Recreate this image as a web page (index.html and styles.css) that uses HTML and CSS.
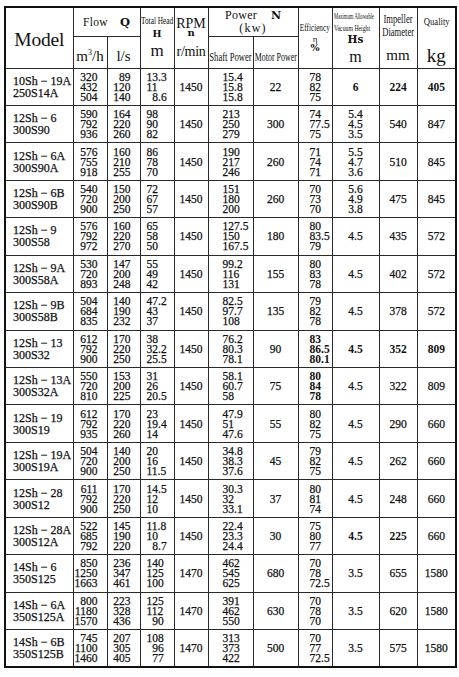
FILE: index.html
```html
<!DOCTYPE html>
<html lang="en">
<head>
<meta charset="utf-8">
<title>Sh pump specifications</title>
<link rel="stylesheet" href="styles.css">
</head>
<body>
<div class="sheet">
<table class="spec">
  <colgroup>
    <col class="w-model"><col class="w-m3h"><col class="w-ls"><col class="w-head"><col class="w-rpm"><col class="w-shaft"><col class="w-motor"><col class="w-eff"><col class="w-vac"><col class="w-imp"><col class="w-qual">
  </colgroup>
  <thead>
    <tr class="h1">
      <th rowspan="2" class="model-h">Model</th>
      <th colspan="2" class="flow-h"><span class="word">Flow</span><span class="sym q">Q</span></th>
      <th rowspan="2" class="stack">
        <div class="cond head-t"><span>Total Head</span></div>
        <div class="sym h-sym">H</div>
        <div class="unit m-unit">m</div>
      </th>
      <th rowspan="2" class="stack">
        <div class="rpm-t">RPM</div>
        <div class="sym n-sym">n</div>
        <div class="unit rmin">r/min</div>
      </th>
      <th colspan="2" class="power-h">
        <div class="pw-line"><span class="word">Power</span><span class="sym">N</span></div>
        <div class="kw">(kw)</div>
      </th>
      <th rowspan="2" class="stack">
        <div class="cond eff-t"><span>Efficiency</span></div>
        <div class="eta">η</div>
        <div class="sym pct">%</div>
      </th>
      <th rowspan="2" class="stack vac">
        <div class="cond tiny max-t"><span>Maximum Allowable</span></div>
        <div class="cond tiny vh-t"><span>Vacuum Height</span></div>
        <div class="sym hs">Hs</div>
        <div class="unit vm">m</div>
      </th>
      <th rowspan="2" class="stack imp">
        <div class="cond imp-t"><span>Impeller</span></div>
        <div class="cond imp-t"><span>Diameter</span></div>
        <div class="unit mm">mm</div>
      </th>
      <th rowspan="2" class="stack">
        <div class="cond q-t"><span>Quality</span></div>
        <div class="unit kg">kg</div>
      </th>
    </tr>
    <tr class="h2">
      <th class="unit2">m<sup>3</sup>/h</th>
      <th class="unit2">l/s</th>
      <th class="cond sub shaft-t"><span>Shaft Power</span></th>
      <th class="cond sub motor-t"><span>Motor Power</span></th>
    </tr>
  </thead>
  <tbody>
    <tr><td class="model">10Sh − 19A<br>250S14A</td><td class="r">320<br>432<br>504</td><td class="r">89<br>120<br>140</td><td class="hd">13.3<br>11<br>&#8199;8.6</td><td class="c">1450</td><td class="sh">15.4<br>15.8<br>15.8</td><td class="c">22</td><td class="ef">78<br>82<br>75</td><td class="c b">6</td><td class="c b">224</td><td class="c b">405</td></tr>
    <tr><td class="model">12Sh − 6<br>300S90</td><td class="r">590<br>792<br>936</td><td class="r">164<br>220<br>260</td><td class="hd">98<br>90<br>82</td><td class="c">1450</td><td class="sh">213<br>250<br>279</td><td class="c">300</td><td class="ef">74<br>77.5<br>75</td><td class="c">5.4<br>4.5<br>3.5</td><td class="c">540</td><td class="c">847</td></tr>
    <tr><td class="model">12Sh − 6A<br>300S90A</td><td class="r">576<br>755<br>918</td><td class="r">160<br>210<br>255</td><td class="hd">86<br>78<br>70</td><td class="c">1450</td><td class="sh">190<br>217<br>246</td><td class="c">260</td><td class="ef">71<br>74<br>71</td><td class="c">5.5<br>4.7<br>3.6</td><td class="c">510</td><td class="c">845</td></tr>
    <tr><td class="model">12Sh − 6B<br>300S90B</td><td class="r">540<br>720<br>900</td><td class="r">150<br>200<br>250</td><td class="hd">72<br>67<br>57</td><td class="c">1450</td><td class="sh">151<br>180<br>200</td><td class="c">260</td><td class="ef">70<br>73<br>70</td><td class="c">5.6<br>4.9<br>3.8</td><td class="c">475</td><td class="c">845</td></tr>
    <tr><td class="model">12Sh − 9<br>300S58</td><td class="r">576<br>792<br>972</td><td class="r">160<br>220<br>270</td><td class="hd">65<br>58<br>50</td><td class="c">1450</td><td class="sh">127.5<br>150<br>167.5</td><td class="c">180</td><td class="ef">80<br>83.5<br>79</td><td class="c">4.5</td><td class="c">435</td><td class="c">572</td></tr>
    <tr><td class="model">12Sh − 9A<br>300S58A</td><td class="r">530<br>720<br>893</td><td class="r">147<br>200<br>248</td><td class="hd">55<br>49<br>42</td><td class="c">1450</td><td class="sh">99.2<br>116<br>131</td><td class="c">155</td><td class="ef">80<br>83<br>78</td><td class="c">4.5</td><td class="c">402</td><td class="c">572</td></tr>
    <tr><td class="model">12Sh − 9B<br>300S58B</td><td class="r">504<br>684<br>835</td><td class="r">140<br>190<br>232</td><td class="hd">47.2<br>43<br>37</td><td class="c">1450</td><td class="sh">82.5<br>97.7<br>108</td><td class="c">135</td><td class="ef">79<br>82<br>78</td><td class="c">4.5</td><td class="c">378</td><td class="c">572</td></tr>
    <tr><td class="model">12Sh − 13<br>300S32</td><td class="r">612<br>792<br>900</td><td class="r">170<br>220<br>250</td><td class="hd">38<br>32.2<br>25.5</td><td class="c">1450</td><td class="sh">76.2<br>80.3<br>78.1</td><td class="c">90</td><td class="ef b">83<br>86.5<br>80.1</td><td class="c b">4.5</td><td class="c b">352</td><td class="c b">809</td></tr>
    <tr><td class="model">12Sh − 13A<br>300S32A</td><td class="r">550<br>720<br>810</td><td class="r">153<br>200<br>225</td><td class="hd">31<br>26<br>20.5</td><td class="c">1450</td><td class="sh">58.1<br>60.7<br>58</td><td class="c">75</td><td class="ef b">80<br>84<br>78</td><td class="c">4.5</td><td class="c">322</td><td class="c">809</td></tr>
    <tr><td class="model">12Sh − 19<br>300S19</td><td class="r">612<br>792<br>935</td><td class="r">170<br>220<br>260</td><td class="hd">23<br>19.4<br>14</td><td class="c">1450</td><td class="sh">47.9<br>51<br>47.6</td><td class="c">55</td><td class="ef">80<br>82<br>75</td><td class="c">4.5</td><td class="c">290</td><td class="c">660</td></tr>
    <tr><td class="model">12Sh − 19A<br>300S19A</td><td class="r">504<br>720<br>900</td><td class="r">140<br>200<br>250</td><td class="hd">20<br>16<br>11.5</td><td class="c">1450</td><td class="sh">34.8<br>38.3<br>37.6</td><td class="c">45</td><td class="ef">79<br>82<br>75</td><td class="c">4.5</td><td class="c">262</td><td class="c">660</td></tr>
    <tr><td class="model">12Sh − 28<br>300S12</td><td class="r">611<br>792<br>900</td><td class="r">170<br>220<br>250</td><td class="hd">14.5<br>12<br>10</td><td class="c">1450</td><td class="sh">30.3<br>32<br>33.1</td><td class="c">37</td><td class="ef">80<br>81<br>74</td><td class="c">4.5</td><td class="c">248</td><td class="c">660</td></tr>
    <tr><td class="model">12Sh − 28A<br>300S12A</td><td class="r">522<br>685<br>792</td><td class="r">145<br>190<br>220</td><td class="hd">11.8<br>10<br>&#8199;8.7</td><td class="c">1450</td><td class="sh">22.4<br>23.3<br>24.4</td><td class="c">30</td><td class="ef">75<br>80<br>77</td><td class="c b">4.5</td><td class="c b">225</td><td class="c">660</td></tr>
    <tr><td class="model">14Sh − 6<br>350S125</td><td class="r">850<br>1250<br>1663</td><td class="r">236<br>347<br>461</td><td class="hd">140<br>125<br>100</td><td class="c">1470</td><td class="sh">462<br>545<br>625</td><td class="c">680</td><td class="ef">70<br>78<br>72.5</td><td class="c">3.5</td><td class="c">655</td><td class="c">1580</td></tr>
    <tr><td class="model">14Sh − 6A<br>350S125A</td><td class="r">800<br>1180<br>1570</td><td class="r">223<br>328<br>436</td><td class="hd">125<br>112<br>&#8199;90</td><td class="c">1470</td><td class="sh">391<br>462<br>550</td><td class="c">630</td><td class="ef">70<br>78<br>70</td><td class="c">3.5</td><td class="c">620</td><td class="c">1580</td></tr>
    <tr><td class="model">14Sh − 6B<br>350S125B</td><td class="r">745<br>1100<br>1460</td><td class="r">207<br>305<br>405</td><td class="hd">108<br>&#8199;96<br>&#8199;77</td><td class="c">1470</td><td class="sh">313<br>373<br>422</td><td class="c">500</td><td class="ef">70<br>77<br>72.5</td><td class="c">3.5</td><td class="c">575</td><td class="c">1580</td></tr>
  </tbody>
</table>
</div>
</body>
</html>
```
FILE: styles.css
```css
html, body {
  margin: 0;
  padding: 0;
  background: #ffffff;
}
body {
  font-family: "Liberation Serif", "Times New Roman", serif;
  color: #111111;
}
.sheet {
  padding: 6px 0 0 4px;
}
.spec {
  border-collapse: collapse;
  table-layout: fixed;
  width: 451px;
  border: 2px solid #111111;
}
.spec th,
.spec td {
  border: 1px solid #2a2a2a;
  padding: 0;
}
.spec th {
  font-weight: normal;
  text-align: center;
  vertical-align: top;
  white-space: nowrap;
  overflow: hidden;
}
.w-model { width: 68px; }
.w-m3h { width: 34px; }
.w-ls { width: 33px; }
.w-head { width: 34px; }
.w-rpm { width: 34px; }
.w-shaft { width: 45px; }
.w-motor { width: 45px; }
.w-eff { width: 34px; }
.w-vac { width: 47px; }
.w-imp { width: 38px; }
.w-qual { width: 39px; }

.h1 { height: 29px; }
.h2 { height: 32px; }

.model-h {
  font-size: 19.5px;
  vertical-align: middle !important;
  padding-top: 4px !important;
  letter-spacing: -0.2px;
}
.flow-h {
  font-size: 11.5px;
  vertical-align: middle !important;
}
.word { letter-spacing: 0.3px; }
.sym {
  font-weight: bold;
  font-family: "DejaVu Serif", "Liberation Serif", serif;
}
.flow-h .q {
  font-size: 11.5px;
  margin-left: 12px;
}
.cond span {
  display: inline-block;
  transform: scaleX(0.74);
  transform-origin: center;
  white-space: nowrap;
  margin: 0 -40px;
}
.head-t {
  font-size: 10.5px;
  line-height: 11px;
  margin-top: 7px;
}
.head-t span { transform: scaleX(0.7); }
.h-sym {
  font-size: 9.5px;
  line-height: 9px;
  margin-top: 3px;
}
.m-unit {
  font-size: 17px;
  line-height: 16px;
  margin-top: 5px;
}
.rpm-t {
  font-size: 14px;
  line-height: 13px;
  margin-top: 9px;
}
.n-sym {
  font-size: 10px;
  line-height: 8px;
  margin-top: -1px;
}
.rmin {
  font-size: 14px;
  line-height: 16px;
  margin-top: 7px;
  letter-spacing: -0.3px;
}
.power-h {
  font-size: 12px;
  vertical-align: middle !important;
}
.pw-line { line-height: 13px; }
.pw-line .sym { margin-left: 14px; font-size: 11px; }
.kw {
  line-height: 13px;
  letter-spacing: 1.2px;
}
.unit2 {
  font-size: 15px;
  vertical-align: bottom !important;
  padding-bottom: 3px !important;
}
.unit2 sup {
  font-size: 8px;
  vertical-align: 6px;
}
.sub {
  font-size: 12px;
  vertical-align: bottom !important;
  padding-bottom: 3px !important;
}
.shaft-t span { transform: scaleX(0.72); }
.motor-t span { transform: scaleX(0.66); }
.eff-t {
  font-size: 11px;
  line-height: 12px;
  margin-top: 13px;
}
.eff-t span { transform: scaleX(0.66); }
.eta {
  font-size: 9px;
  line-height: 7px;
  margin-top: 3px;
}
.pct {
  font-size: 9.5px;
  line-height: 9px;
}
.vac .tiny {
  font-size: 8.5px;
  line-height: 10px;
  text-align: left;
}
.vac .tiny span {
  transform-origin: left;
  margin: 0 -40px 0 1px;
}
.max-t { margin-top: 3px; }
.max-t span { transform: scaleX(0.55) !important; }
.vh-t { margin-top: 2px; }
.vh-t span { transform: scaleX(0.68) !important; }
.hs {
  font-size: 10.5px;
  line-height: 10px;
  margin-top: 1px;
}
.vm {
  font-size: 16px;
  line-height: 16px;
  margin-top: 5px;
}
.imp-t {
  font-size: 13px;
  line-height: 13px;
}
.imp .imp-t:first-child { margin-top: 4px; }
.imp-t span { transform: scaleX(0.66); }
.mm {
  font-size: 15px;
  line-height: 16px;
  margin-top: 9px;
}
.q-t {
  font-size: 10.5px;
  line-height: 11px;
  margin-top: 8px;
}
.q-t span { transform: scaleX(0.82); }
.kg {
  font-size: 19px;
  line-height: 18px;
  margin-top: 20px;
}

.spec tbody tr { height: 37.45px; }
.spec td {
  font-size: 11.5px;
  line-height: 10px;
  vertical-align: middle;
  white-space: nowrap;
  -webkit-text-stroke: 0.25px #111;
}
.spec td.model {
  font-size: 12px;
  line-height: 12px;
  text-align: left;
  padding-left: 7px;
}
.spec td.r {
  text-align: right;
  padding-right: 9px;
}
.spec td.hd {
  text-align: left;
  padding-left: 6px;
}
.spec td.sh {
  text-align: left;
  padding-left: 14px;
}
.spec td.ef {
  text-align: left;
  padding-left: 11px;
}
.spec td.c { text-align: center; }
.spec td.b { font-weight: bold; -webkit-text-stroke: 0; }
```
